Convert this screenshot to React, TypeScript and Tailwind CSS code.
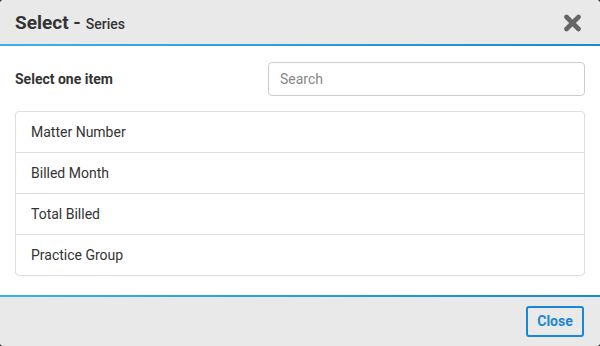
import React from "react";

const items = ["Matter Number", "Billed Month", "Total Billed", "Practice Group"];

export default function App() {
  return (
    <div className="w-[600px] h-[346px] bg-[#3a3a3a]" style={{ fontFamily: "Roboto, 'Liberation Sans', sans-serif" }}>
      <div className="w-full h-full rounded-[4px] overflow-hidden bg-white flex flex-col">
        <div className="h-[44px] bg-[#e9e9e9] flex items-center justify-between pl-[15px] pr-[18px]">
          <div className="text-[#333] flex items-baseline pt-[2px]">
            <span className="text-[19px] font-bold">Select -</span>
            <span className="text-[14px] font-medium ml-[5px]">Series</span>
          </div>
          <svg width="19" height="18" viewBox="0 0 19 18" className="mt-[1px]">
            <path d="M3.5 3 L15.5 15 M15.5 3 L3.5 15" stroke="#666" strokeWidth="4.6" strokeLinecap="round" />
          </svg>
        </div>
        <div className="h-[2px] bg-gradient-to-r from-[#3db0e3] to-[#1a87d2]" />
        <div className="flex-1 px-[15px] pt-[16px]">
          <div className="flex items-center justify-between">
            <span className="text-[14px] font-bold text-[#333]">Select one item</span>
            <input
              placeholder="Search"
              className="w-[317px] h-[34px] border border-[#ccc] rounded-[4px] px-[11px] text-[14px] text-[#555] placeholder:text-[#888] outline-none"
            />
          </div>
          <div className="mt-[15px] border border-[#ddd] rounded-[4px]">
            {items.map((t, i) => (
              <div
                key={t}
                className={`flex items-center px-[15px] text-[14px] text-[#333] ${i > 0 ? "border-t border-[#ddd] h-[41px]" : "h-[40px]"}`}
              >
                {t}
              </div>
            ))}
          </div>
        </div>
        <div className="h-[2px] bg-gradient-to-r from-[#3db0e3] to-[#1a87d2]" />
        <div className="h-[49px] bg-[#e9e9e9] flex items-center justify-end pr-[16px]">
          <button className="w-[58px] h-[31px] border-2 border-[#1a87d2] rounded-[3px] text-[14px] font-bold text-[#1a87d2]">
            Close
          </button>
        </div>
      </div>
    </div>
  );
}
